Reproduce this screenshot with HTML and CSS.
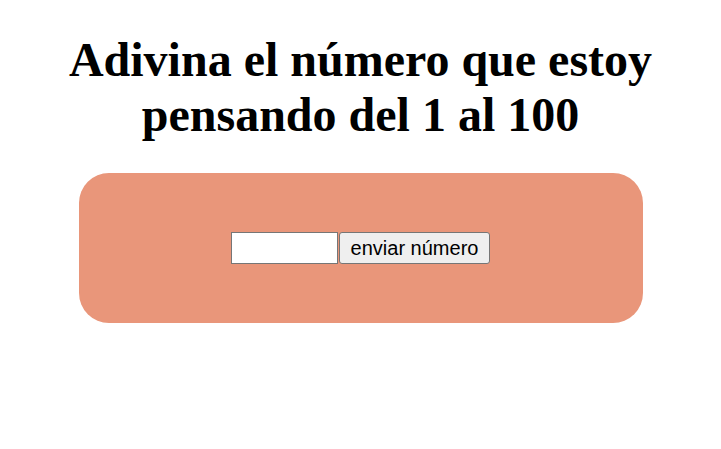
FILE: index.html
```html
<!DOCTYPE html>
<html lang="es">
<head>
<meta charset="utf-8">
<title>Adivina el número</title>
<link rel="stylesheet" href="styles.css">
</head>
<body>
<h1 class="title">Adivina el número que estoy pensando del 1 al 100</h1>
<div class="panel">
  <form class="guess-form">
    <input class="guess-input" type="text">
    <button class="guess-button" type="button">enviar número</button>
  </form>
</div>
</body>
</html>
```
FILE: styles.css
```css
html, body {
  background: #ffffff;
}
body {
  margin: 0 12px 12px;
  padding-top: 1px;
  font-family: "Liberation Serif", "Times New Roman", serif;
}
.title {
  font-size: 48px;
  font-weight: bold;
  line-height: 55px;
  text-align: center;
  margin: 31px 0 31px;
  color: #000;
}
.panel {
  width: 564px;
  height: 150px;
  margin: 0 auto;
  background: #e9967a;
  border-radius: 30px;
  display: flex;
  align-items: center;
  justify-content: center;
}
.guess-form {
  display: flex;
  align-items: stretch;
  margin: 0;
}
.guess-input {
  box-sizing: border-box;
  width: 107px;
  height: 32px;
  margin: 0;
  padding: 0 3px;
  border: 1px solid #767676;
  background: #ffffff;
  font-family: "Liberation Sans", Arial, sans-serif;
  font-size: 20px;
}
.guess-button {
  box-sizing: border-box;
  height: 32px;
  margin: 0 0 0 1px;
  padding: 0 11px;
  border: 1px solid #767676;
  border-radius: 3px;
  background: #efefef;
  color: #000;
  font-family: "Liberation Sans", Arial, sans-serif;
  font-size: 20px;
  line-height: 1;
}
```
